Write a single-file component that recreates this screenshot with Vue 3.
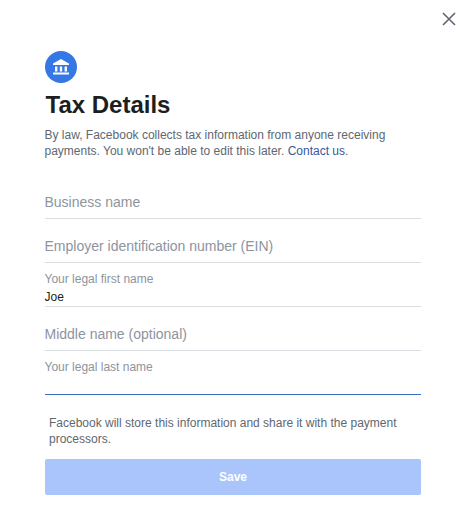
<script setup>
const fields = [
  { id: 'business', placeholder: 'Business name' },
  { id: 'ein', placeholder: 'Employer identification number (EIN)' },
  { id: 'first', label: 'Your legal first name', value: 'Joe' },
  { id: 'middle', placeholder: 'Middle name (optional)' },
  { id: 'last', label: 'Your legal last name', value: '', active: true },
];
</script>

<template>
  <div class="dialog">
    <button class="close" aria-label="Close">
      <svg width="14" height="14" viewBox="0 0 14 14">
        <path d="M1 1L13 13M13 1L1 13" stroke="#606770" stroke-width="1.6" fill="none" />
      </svg>
    </button>

    <div class="badge">
      <svg width="20" height="20" viewBox="0 0 20 20">
        <path d="M10 2L18 6.5V8H2V6.5Z" fill="#fff" />
        <rect x="4" y="9.5" width="2.4" height="5" fill="#fff" />
        <rect x="8.8" y="9.5" width="2.4" height="5" fill="#fff" />
        <rect x="13.6" y="9.5" width="2.4" height="5" fill="#fff" />
        <rect x="2" y="15.5" width="16" height="2" fill="#fff" />
      </svg>
    </div>

    <h1 class="title">Tax Details</h1>
    <p class="intro">
      By law, Facebook collects tax information from anyone receiving payments. You won't be able to edit this later.
      <span class="link">Contact us</span><span>.</span>
    </p>

    <div class="fields">
      <div v-for="f in fields" :key="f.id" class="field" :class="{ active: f.active }">
        <template v-if="f.label">
          <div class="label">{{ f.label }}</div>
          <div class="value">{{ f.value }}</div>
        </template>
        <div v-else class="placeholder">{{ f.placeholder }}</div>
      </div>
    </div>

    <p class="note">Facebook will store this information and share it with the payment processors.</p>
    <button class="save">Save</button>
  </div>
</template>

<style scoped>
.dialog {
  position: relative;
  width: 463px;
  height: 516px;
  box-sizing: border-box;
  padding: 51px 42px 0 45px;
  background: #fff;
  font-family: "Liberation Sans", Arial, sans-serif;
  overflow: hidden;
}

.close {
  position: absolute;
  top: 12px;
  right: 7px;
  width: 14px;
  height: 14px;
  padding: 0;
  border: 0;
  background: none;
  display: flex;
}

.badge {
  width: 32px;
  height: 32px;
  border-radius: 50%;
  background: #3578e5;
  display: flex;
  align-items: center;
  justify-content: center;
}

.title {
  margin: 7px 0 0 0.5px;
  font-size: 24px;
  line-height: 29px;
  font-weight: 700;
  color: #1c1e21;
}

.intro {
  margin: 8px 0 0 -0.5px;
  font-size: 12px;
  line-height: 16px;
  color: #606770;
}

.link {
  color: #365899;
}

.fields {
  margin-top: 16px;
}

.field {
  height: 44px;
  box-sizing: border-box;
  border-bottom: 1px solid #dadde1;
  display: flex;
  flex-direction: column;
  justify-content: flex-end;
}

.field.active {
  border-bottom-color: #3b69c0;
}

.placeholder {
  font-size: 14px;
  line-height: 18px;
  color: #8d949e;
  padding-bottom: 7px;
  margin-left: -0.5px;
}

.label {
  font-size: 12px;
  line-height: 16px;
  color: #8d949e;
  margin: 0 0 3px -0.5px;
}

.value {
  height: 14px;
  font-size: 12px;
  line-height: 14px;
  color: #1c1e21;
  margin: 0 0 2px -0.5px;
}

.note {
  margin: 20px 0 0 4px;
  font-size: 12px;
  line-height: 16px;
  color: #606770;
}

.save {
  display: block;
  width: 100%;
  height: 36px;
  margin-top: 12px;
  border: 0;
  border-radius: 2px;
  background: #a9c5fb;
  color: #fff;
  font-family: "Liberation Sans", Arial, sans-serif;
  font-size: 12px;
  font-weight: 700;
}
</style>
